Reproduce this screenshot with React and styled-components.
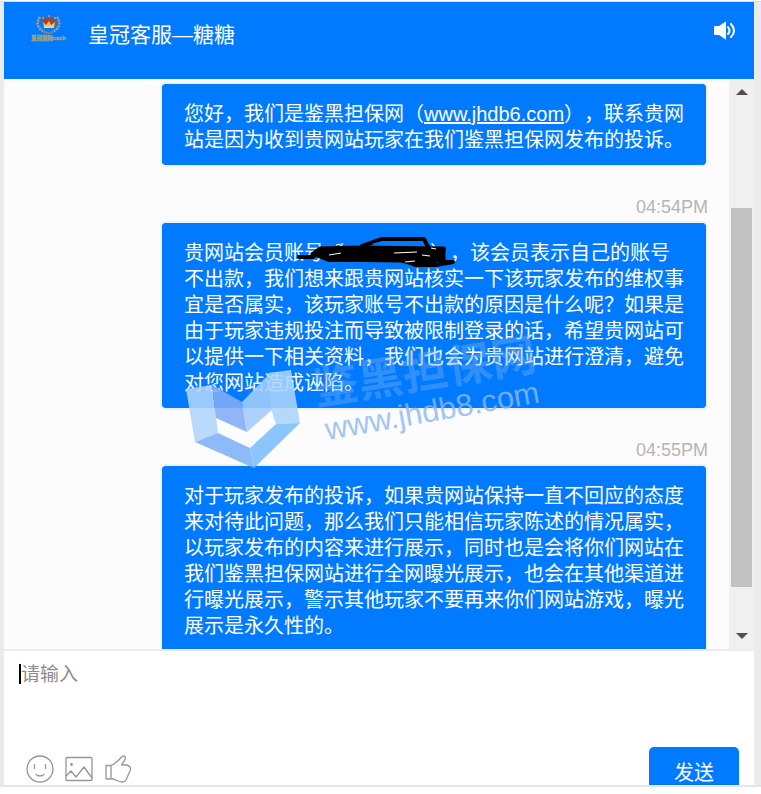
import React from 'react';
import styled, { createGlobalStyle } from 'styled-components';

const GlobalStyle = createGlobalStyle`
  * { box-sizing: border-box; }
  body {
    margin: 0;
    background: #fff;
    font-family: "Liberation Sans", "Noto Sans CJK SC", sans-serif;
    text-spacing-trim: space-all;
  }
`;

const Page = styled.div`
  margin-top: 1px;
  height: calc(100vh - 8px);
  display: flex;
  padding: 0 7px 0 4px;
  background: #ebebeb;
  border-top: 1px solid #d9dcdf;
  border-bottom: 2px solid #e6e6e6;
`;

const Widget = styled.main`
  flex: 1;
  min-width: 0;
  display: flex;
  flex-direction: column;
  background: #fff;
`;

const Header = styled.header`
  flex: none;
  min-height: 77px;
  display: flex;
  align-items: flex-start;
  padding: 12px 18px 0 27px;
  background: #007bff;
  color: #fff;
`;

const Title = styled.h1`
  flex: 1;
  margin: 7px 0 0 21px;
  font-size: 21px;
  line-height: 28px;
  font-weight: 400;
`;

const IconButton = styled.button`
  display: flex;
  padding: 0;
  border: 0;
  background: none;
  color: inherit;
`;

const SoundButton = styled(IconButton)`
  margin-top: 7px;
`;

const Chat = styled.section`
  position: relative;
  flex: 1;
  min-height: 0;
  display: flex;
  overflow: hidden;
  background: #fcfcfc;
`;

const Messages = styled.div`
  flex: 1;
  min-width: 0;
  padding: 3px 21px 0 156px;
`;

const Message = styled.article`
  margin-bottom: 28px;
`;

const Time = styled.time`
  display: block;
  margin-bottom: 2px;
  text-align: right;
  font-size: 18px;
  line-height: 24px;
  color: #b5b5b5;
`;

const Bubble = styled.div`
  position: relative;
  padding: 17px 20px 12px 22px;
  border: 2px solid #f0f1f3;
  border-radius: 5px;
  background: #007bff;
  background-clip: padding-box;
  color: #fff;
  font-size: 20px;
  line-height: 26px;
`;

const Line = styled.span`
  display: block;
  white-space: nowrap;
`;

const SiteLink = styled.a`
  color: inherit;
  text-decoration: underline;
`;

const Redacted = styled.span`
  display: inline-block;
  width: 86px;
`;

const Scribble = styled.svg`
  position: absolute;
  left: 134px;
  top: 10px;
`;

const Watermark = styled.svg`
  position: absolute;
  left: 176px;
  top: 251px;
  pointer-events: none;
`;

const Scrollbar = styled.div`
  flex: none;
  width: 25px;
  display: flex;
  flex-direction: column;
  padding: 0 2px;
  background: #f0f0f0;
`;

const ScrollArrow = styled.button`
  height: 26px;
  display: flex;
  align-items: center;
  justify-content: center;
  padding: 0;
  border: 0;
  background: none;
`;

const Track = styled.div`
  flex: 1;
  display: grid;
  grid-template-rows: 103fr 379fr 36fr;
`;

const Thumb = styled.div`
  grid-row: 2;
  background: #c1c1c1;
`;

const Composer = styled.form`
  flex: none;
  height: 136px;
  display: flex;
  flex-direction: column;
  overflow: hidden;
  border-top: 2px solid #ebebeb;
  background: #fff;
`;

const InputRow = styled.div`
  flex: 1;
  display: flex;
  padding: 10px 15px 0;
`;

const Caret = styled.span`
  width: 2px;
  height: 20px;
  margin-top: 3px;
  background: #000;
`;

const MessageInput = styled.textarea`
  flex: 1;
  padding: 0;
  border: 0;
  outline: 0;
  resize: none;
  background: none;
  font-family: "Liberation Serif", "Noto Sans CJK SC", serif;
  font-size: 19px;
  line-height: 28px;
  &::placeholder { color: #8c8c8c; opacity: 1; }
`;

const Footer = styled.div`
  flex: none;
  height: 38px;
  display: flex;
  justify-content: space-between;
  align-items: flex-start;
  padding: 0 15px 0 22px;
`;

const Tools = styled.div`
  display: flex;
  gap: 10px;
  padding-top: 8px;
  color: #969696;
`;

const SendButton = styled.button`
  width: 90px;
  height: 48px;
  border: 0;
  border-radius: 5px;
  background: #007bff;
  color: #fff;
  font-family: inherit;
  font-size: 20px;
`;

function CrownLogo() {
  return (
    <svg width="36" height="28" viewBox="0 0 36 28" role="img" aria-label="皇冠国际cash">
      <g fill="none" stroke="#a9a183" strokeWidth="2.5" strokeDasharray="2 1">
        <path d="M9 3C5 8 6 15 14 18" />
        <path d="M26 3c4 5 3 12-5 15" />
      </g>
      <path d="M14 18q4 2 8 0" fill="none" stroke="#77828d" strokeWidth="2" />
      <path d="M11 5q3-3 5 0 1-4 3 0 3-3 6 0l-2 9H13z" fill="#a8442c" />
      <path d="M12 8l3 3 3-4 2 4 4-3-1 6H13z" fill="#ecc05b" />
      <path d="M13 13h10" stroke="#f1d48a" strokeWidth="2" />
      <circle cx="18" cy="2" r="1" fill="#d7a34a" />
      <circle cx="12" cy="4" r="1" fill="#d7a34a" />
      <circle cx="24" cy="4" r="1" fill="#d7a34a" />
      <text x="0" y="26" fontSize="5.5" fontWeight="700" fill="#aaa180" stroke="#aaa180" strokeWidth="0.3">皇冠国际cash</text>
    </svg>
  );
}

function SpeakerIcon() {
  return (
    <svg width="22" height="20" viewBox="0 0 22 20" aria-hidden="true">
      <path d="M1 5h4l6-4q1-1 1 0v17q0 1-1 0l-6-4H1q-1 0-1-1V6q0-1 1-1z" fill="#fff" />
      <path d="M14 6q3 4 0 7M17 3q6 7 0 13" fill="none" stroke="#fff" strokeWidth="2" strokeLinecap="round" />
    </svg>
  );
}

function SmileIcon() {
  return (
    <svg width="28" height="28" viewBox="0 0 28 28" fill="none" stroke="currentColor" strokeWidth="1.3" strokeLinecap="round" aria-hidden="true">
      <circle cx="14" cy="14" r="13" />
      <path d="M8.500 9.500v4M19.500 9.500v4M10 19.500q4 3 8 0" />
    </svg>
  );
}

function PictureIcon() {
  return (
    <svg width="30" height="28" viewBox="0 0 30 28" fill="none" stroke="currentColor" strokeWidth="1.3" strokeLinejoin="round" aria-hidden="true">
      <rect x="2" y="2.500" width="26" height="23" rx="1" />
      <path d="M2 21l5-5 5 6 8-10 8 11" />
      <circle cx="7.500" cy="9.500" r="1.400" fill="currentColor" stroke="none" />
    </svg>
  );
}

function ThumbIcon() {
  return (
    <svg width="28" height="28" viewBox="0 0 28 28" fill="none" stroke="currentColor" strokeWidth="1.3" strokeLinejoin="round" aria-hidden="true">
      <path d="M2 10.500h5v13.500H2zM7 10.500C11 9 15 5 18 1.500q3-1.500 3.500 1.500c0 2-2.500 4-4 7q6-1 8.500 2 1 1 0 4l-4 9q-1 2-4 2c-4 0-7-3-11-3.500" />
    </svg>
  );
}

function ScribbleMark() {
  return (
    <Scribble width="162" height="38" viewBox="296 233 162 38" aria-hidden="true">
      <g stroke="#000" strokeLinejoin="round" strokeLinecap="round">
        <path d="M312 254l8-6 40-1 84 1v12l-26 4-18-3-72-1-10-4z" fill="#000" strokeWidth="3" />
        <path d="M299 257h14l6-6M362 246l20-7h42l4 8M444 249h-10M441 262h12l-17 3H416l-14-5M329 260h70" fill="none" strokeWidth="4" />
      </g>
      <path d="M371 244l12-3h39l2 3z" fill="#007bff" />
      <path d="M329 255l12-2M336 245l4-1M394 253l23-1M422 255l8 1M405 262l10-1M431 248l5 1" stroke="#fff" fill="none" />
    </Scribble>
  );
}

function WatermarkMark() {
  return (
    <Watermark width="375" height="145" viewBox="180 330 375 145">
      <g opacity="0.88">
        <path d="M186 389l26-4 6 48-23 9z" fill="#b0d6fb" />
        <path d="M212 385l30 17 5 30-31-14z" fill="#82adf8" />
        <path d="M242 402l28-29 2 37-25 22z" fill="#a2cdfb" />
        <path d="M268 373l23-3 9 53-24 1-5-15z" fill="#acd5fc" />
        <path d="M218 433l32 15 4 20-59-26z" fill="#7fb2f7" />
        <path d="M250 448l26-24 24-1-46 45z" fill="#7dbefb" />
      </g>
      <text x="316" y="405" transform="rotate(-9 316 405)" fontSize="45" fontWeight="700" fill="#78aef5" opacity="0.4">鉴黑担保网</text>
      <text x="327" y="440" transform="rotate(-10 327 440)" fontSize="31" fill="#8cb8f4" opacity="0.8">www.jhdb8.com</text>
    </Watermark>
  );
}

function Lines({ items }) {
  return items.map((text) => <Line key={text}>{text}</Line>);
}

export default function App() {
  return (
    <>
      <GlobalStyle />
      <Page>
        <Widget>
          <Header>
            <CrownLogo />
            <Title>皇冠客服—糖糖</Title>
            <SoundButton type="button" aria-label="声音"><SpeakerIcon /></SoundButton>
          </Header>
          <Chat>
            <Messages>
              <Message>
                <Bubble>
                  <Line>您好，我们是鉴黑担保网（<SiteLink href="#site">www.jhdb6.com</SiteLink>），联系贵网</Line>
                  <Line>站是因为收到贵网站玩家在我们鉴黑担保网发布的投诉。</Line>
                </Bubble>
              </Message>
              <Message>
                <Time>04:54PM</Time>
                <Bubble>
                  <Line>贵网站会员账号（<Redacted />），该会员表示自己的账号</Line>
                  <Lines items={[
                    '不出款，我们想来跟贵网站核实一下该玩家发布的维权事',
                    '宜是否属实，该玩家账号不出款的原因是什么呢？如果是',
                    '由于玩家违规投注而导致被限制登录的话，希望贵网站可',
                    '以提供一下相关资料，我们也会为贵网站进行澄清，避免',
                    '对您网站造成诬陷。',
                  ]} />
                  <ScribbleMark />
                </Bubble>
              </Message>
              <Message>
                <Time>04:55PM</Time>
                <Bubble>
                  <Lines items={[
                    '对于玩家发布的投诉，如果贵网站保持一直不回应的态度',
                    '来对待此问题，那么我们只能相信玩家陈述的情况属实，',
                    '以玩家发布的内容来进行展示，同时也是会将你们网站在',
                    '我们鉴黑担保网站进行全网曝光展示，也会在其他渠道进',
                    '行曝光展示，警示其他玩家不要再来你们网站游戏，曝光',
                    '展示是永久性的。',
                  ]} />
                </Bubble>
              </Message>
            </Messages>
            <Scrollbar>
              <ScrollArrow type="button" aria-label="向上滚动">
                <svg width="12" height="6" viewBox="0 0 12 6"><path d="M0 6l6-6 6 6z" fill="#505050" /></svg>
              </ScrollArrow>
              <Track><Thumb /></Track>
              <ScrollArrow type="button" aria-label="向下滚动">
                <svg width="12" height="6" viewBox="0 0 12 6"><path d="M0 0l6 6 6-6z" fill="#505050" /></svg>
              </ScrollArrow>
            </Scrollbar>
            <WatermarkMark />
          </Chat>
          <Composer onSubmit={(event) => event.preventDefault()}>
            <InputRow>
              <Caret />
              <MessageInput aria-label="消息" placeholder="请输入" />
            </InputRow>
            <Footer>
              <Tools>
                <IconButton type="button" aria-label="表情"><SmileIcon /></IconButton>
                <IconButton type="button" aria-label="图片"><PictureIcon /></IconButton>
                <IconButton type="button" aria-label="点赞"><ThumbIcon /></IconButton>
              </Tools>
              <SendButton type="submit">发送</SendButton>
            </Footer>
          </Composer>
        </Widget>
      </Page>
    </>
  );
}
